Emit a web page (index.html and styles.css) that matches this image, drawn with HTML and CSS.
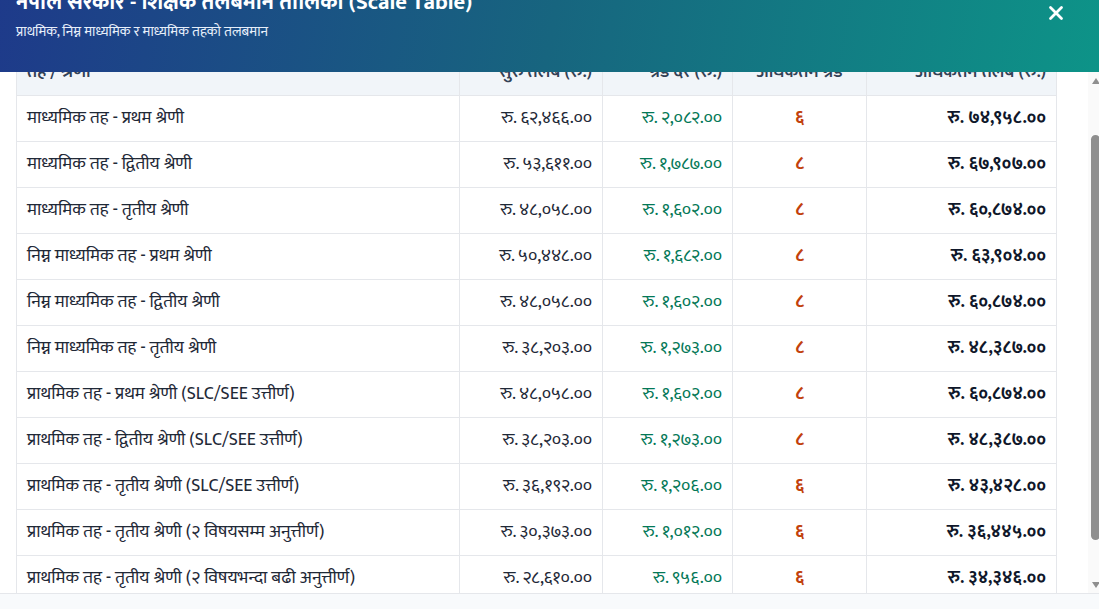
FILE: index.html
```html
<!DOCTYPE html>
<html lang="ne">
<head>
<meta charset="utf-8">
<title>शिक्षक तलबमान तालिका</title>
<link rel="stylesheet" href="styles.css">
</head>
<body>
<div class="modal">
  <header class="modal-header">
    <div class="titles">
      <h1 class="title">नेपाल सरकार - शिक्षक तलबमान तालिका (Scale Table)</h1>
      <p class="subtitle">प्राथमिक, निम्न माध्यमिक र माध्यमिक तहको तलबमान</p>
    </div>
    <button class="close" aria-label="बन्द">
      <svg viewBox="0 0 16 16" width="16" height="16"><path d="M2.5 2.5 L13.5 13.5 M13.5 2.5 L2.5 13.5" stroke="#fff" stroke-width="2.8" stroke-linecap="round" fill="none"/></svg>
    </button>
  </header>
  <div class="modal-body">
    <div class="scroll-area">
      <table class="scale">
        <colgroup>
          <col class="c1"><col class="c2"><col class="c3"><col class="c4"><col class="c5">
        </colgroup>
        <thead>
          <tr>
            <th class="left">तह / श्रेणी</th>
            <th class="right">सुरु तलब (रु.)</th>
            <th class="right">ग्रेड दर (रु.)</th>
            <th class="center">अधिकतम ग्रेड</th>
            <th class="right">अधिकतम तलब (रु.)</th>
          </tr>
        </thead>
        <tbody>
          <tr><td>माध्यमिक तह - प्रथम श्रेणी</td><td class="right">रु. ६२,४६६.००</td><td class="right grade">रु. २,०८२.००</td><td class="center count">६</td><td class="right max">रु. ७४,९५८.००</td></tr>
          <tr><td>माध्यमिक तह - द्वितीय श्रेणी</td><td class="right">रु. ५३,६११.००</td><td class="right grade">रु. १,७८७.००</td><td class="center count">८</td><td class="right max">रु. ६७,९०७.००</td></tr>
          <tr><td>माध्यमिक तह - तृतीय श्रेणी</td><td class="right">रु. ४८,०५८.००</td><td class="right grade">रु. १,६०२.००</td><td class="center count">८</td><td class="right max">रु. ६०,८७४.००</td></tr>
          <tr><td>निम्न माध्यमिक तह - प्रथम श्रेणी</td><td class="right">रु. ५०,४४८.००</td><td class="right grade">रु. १,६८२.००</td><td class="center count">८</td><td class="right max">रु. ६३,९०४.००</td></tr>
          <tr><td>निम्न माध्यमिक तह - द्वितीय श्रेणी</td><td class="right">रु. ४८,०५८.००</td><td class="right grade">रु. १,६०२.००</td><td class="center count">८</td><td class="right max">रु. ६०,८७४.००</td></tr>
          <tr><td>निम्न माध्यमिक तह - तृतीय श्रेणी</td><td class="right">रु. ३८,२०३.००</td><td class="right grade">रु. १,२७३.००</td><td class="center count">८</td><td class="right max">रु. ४८,३८७.००</td></tr>
          <tr><td>प्राथमिक तह - प्रथम श्रेणी (SLC/SEE उत्तीर्ण)</td><td class="right">रु. ४८,०५८.००</td><td class="right grade">रु. १,६०२.००</td><td class="center count">८</td><td class="right max">रु. ६०,८७४.००</td></tr>
          <tr><td>प्राथमिक तह - द्वितीय श्रेणी (SLC/SEE उत्तीर्ण)</td><td class="right">रु. ३८,२०३.००</td><td class="right grade">रु. १,२७३.००</td><td class="center count">८</td><td class="right max">रु. ४८,३८७.००</td></tr>
          <tr><td>प्राथमिक तह - तृतीय श्रेणी (SLC/SEE उत्तीर्ण)</td><td class="right">रु. ३६,१९२.००</td><td class="right grade">रु. १,२०६.००</td><td class="center count">६</td><td class="right max">रु. ४३,४२८.००</td></tr>
          <tr><td>प्राथमिक तह - तृतीय श्रेणी (२ विषयसम्म अनुत्तीर्ण)</td><td class="right">रु. ३०,३७३.००</td><td class="right grade">रु. १,०१२.००</td><td class="center count">६</td><td class="right max">रु. ३६,४४५.००</td></tr>
          <tr><td>प्राथमिक तह - तृतीय श्रेणी (२ विषयभन्दा बढी अनुत्तीर्ण)</td><td class="right">रु. २८,६१०.००</td><td class="right grade">रु. ९५६.००</td><td class="center count">६</td><td class="right max">रु. ३४,३४६.००</td></tr>
        </tbody>
      </table>
    </div>
    <div class="scrollbar" aria-hidden="true">
      <div class="sb-btn"><span class="arrow-up"></span></div>
      <div class="sb-track"><div class="sb-thumb"></div></div>
      <div class="sb-btn"><span class="arrow-down"></span></div>
    </div>
  </div>
  <footer class="modal-footer"></footer>
</div>
</body>
</html>
```
FILE: styles.css
```css
html, body {
  margin: 0;
  padding: 0;
  overflow: hidden;
  background: #ffffff;
}
body {
  font-family: "Mukta", "Noto Sans Devanagari", sans-serif;
  color: #1e293b;
}
.modal {
  width: 1103px;
  margin-top: -11px;
  display: flex;
  flex-direction: column;
  background: #ffffff;
}
.modal-header {
  height: 83px;
  box-sizing: border-box;
  padding: 0 39px 0 16px;
  display: flex;
  justify-content: space-between;
  align-items: flex-start;
  background: linear-gradient(100deg, #1e3a8a 0%, #17657f 50%, #0d9488 100%);
  color: #ffffff;
}
.title {
  margin: 0;
  font-size: 22.5px;
  line-height: 28px;
  font-weight: 700;
}
.subtitle {
  margin: 5px 0 0;
  font-size: 14.2px;
  line-height: 20px;
  color: #e6eefa;
}
.close {
  margin-top: 16px;
  width: 16px;
  height: 16px;
  padding: 0;
  border: 0;
  background: transparent;
  display: flex;
}
.modal-body {
  height: 521px;
  display: flex;
}
.scroll-area {
  flex: 1;
  min-width: 0;
  overflow: hidden;
  padding: 0 31px 0 16px;
}
.scrollbar {
  width: 15px;
  flex: none;
  display: flex;
  flex-direction: column;
  background: #fafafa;
}
.sb-btn {
  height: 15px;
  flex: none;
  display: flex;
  justify-content: center;
  align-items: center;
}
.arrow-up, .arrow-down {
  width: 0;
  height: 0;
  border-left: 4.5px solid transparent;
  border-right: 4.5px solid transparent;
}
.arrow-up { border-bottom: 6px solid #8f8f8f; margin-top: 2px; }
.arrow-down { border-top: 6px solid #8f8f8f; margin-bottom: 2px; }
.sb-track {
  flex: 1;
  padding: 48px 3px 0;
}
.sb-thumb {
  height: 405px;
  border-radius: 5px;
  background: #8f8f8f;
}
.scale {
  width: 100%;
  margin-top: -23px;
  border-collapse: collapse;
  table-layout: fixed;
  font-size: 18px;
  line-height: 21px;
}
.c1 { width: 443px; }
.c2 { width: 143px; }
.c3 { width: 130px; }
.c4 { width: 134px; }
.c5 { width: auto; }
.scale th, .scale td {
  border: 1px solid #e5e7eb;
  padding: 12px 10px;
  white-space: nowrap;
}
.scale th {
  background: #f1f5f9;
  font-weight: 600;
  color: #334155;
}
.scale td { color: #1f2937; font-weight: 400; }
.left { text-align: left; }
.right { text-align: right; }
.center { text-align: center; }
.scale td.grade { color: #047857; font-weight: 400; }
.scale td.count { color: #c2410c; font-weight: 700; }
.scale td.max { font-weight: 700; color: #0f172a; }
.modal-footer {
  height: 60px;
  background: #f8fafc;
  border-top: 1px solid #e5e7eb;
}
```
